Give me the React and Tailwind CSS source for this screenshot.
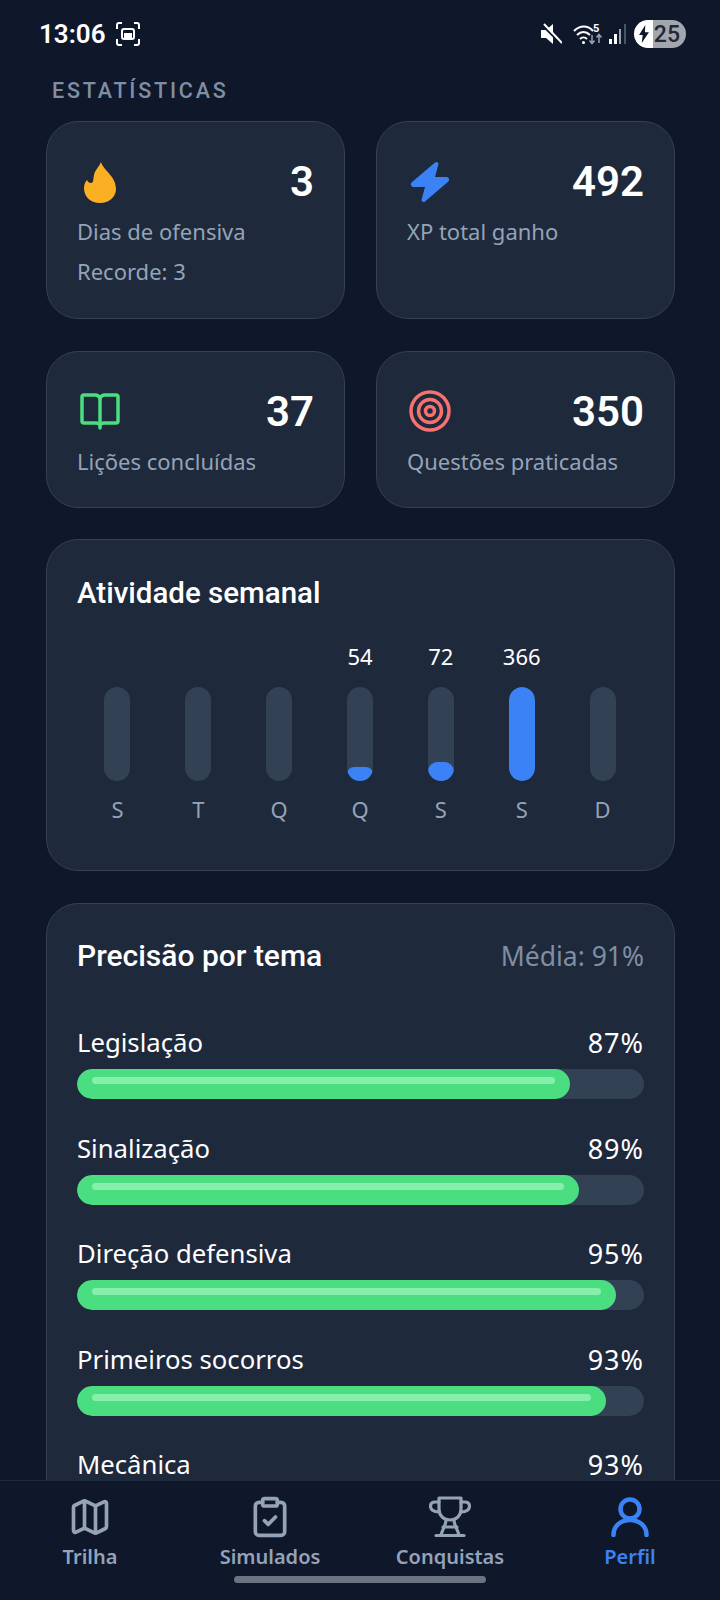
import { Map, ClipboardCheck } from 'lucide-react';

const sans = 'font-["Noto_Sans",sans-serif]';
const roboto = "font-['Roboto',sans-serif]";

const week = [
  { day: 'S', value: null, fill: 0 },
  { day: 'T', value: null, fill: 0 },
  { day: 'Q', value: null, fill: 0 },
  { day: 'Q', value: 54, fill: 14 },
  { day: 'S', value: 72, fill: 19 },
  { day: 'S', value: 366, fill: 94 },
  { day: 'D', value: null, fill: 0 },
];

// bar is the drawn width, pct the rounded number shown next to it
const topics = [
  { name: 'Legislação', pct: 87, bar: 87 },
  { name: 'Sinalização', pct: 89, bar: 88.6 },
  { name: 'Direção defensiva', pct: 95, bar: 95 },
  { name: 'Primeiros socorros', pct: 93, bar: 93.3 },
  { name: 'Mecânica', pct: 93, bar: 93.3 },
];

function FlameIcon() {
  return (
    <svg className="ml-[7px]" width="32" height="41" viewBox="0 0 32 41" fill="#fbb024">
      <path d="M17 0c2 8 15 14 15 27 0 8-7 14-16 14S0 35 0 26c0-3 1-6 3-8 1 2 2 3 4 3 3 0 2-4 3-8 1-5 5-8 7-13z" />
    </svg>
  );
}

function BoltIcon() {
  return (
    <svg className="ml-[3px]" width="40" height="42" viewBox="0 0 40 42" fill="#3b82f6">
      <path d="M25 1.500c1.600-1.400 4 0 3.400 2L25 16h11.500c2.300 0 3.500 2.700 1.900 4.400L15 40.500c-1.600 1.400-4 0-3.400-2L15 26H3.500C1.200 26 0 23.300 1.600 21.600z" />
    </svg>
  );
}

function BookIcon() {
  return (
    <svg className="ml-[3px] -mt-[2px]" width="40" height="38" viewBox="0 0 40 38" fill="none" stroke="#4ade80" strokeWidth="3.500" strokeLinejoin="round" strokeLinecap="round">
      <path d="M20 6c-1-2-3-3-5-3H4a2 2 0 0 0-2 2v24a2 2 0 0 0 2 2h12c2 0 4 1 4 2 0-1 2-2 4-2h12a2 2 0 0 0 2-2V5a2 2 0 0 0-2-2H25c-2 0-4 1-5 3z" />
      <path d="M20 6v30" />
    </svg>
  );
}

function TargetIcon() {
  return (
    <svg className="ml-[2px] -mt-[2px]" width="42" height="42" viewBox="0 0 42 42" fill="none" stroke="#f87171" strokeWidth="3.500">
      <circle cx="21" cy="21" r="19" />
      <circle cx="21" cy="21" r="11.500" />
      <circle cx="21" cy="21" r="4.500" />
    </svg>
  );
}

function TrophyIcon() {
  return (
    <svg width="42" height="42" viewBox="0 0 42 42" fill="none" stroke="#94a3b8" strokeWidth="3.200" strokeLinecap="round" strokeLinejoin="round">
      <path d="M10 2h22v11c0 7-5 11-11 11S10 20 10 13z" />
      <path d="M10 6H6c-3 0-4.500 2-4.500 4.500S4 16 10 16" />
      <path d="M32 6h4c3 0 4.500 2 4.500 4.500S38 16 32 16" />
      <path d="M17 24c0 5-3 8-5 15M25 24c0 5 3 8 5 15" />
      <path d="M14 31h14" />
      <path d="M7 39.500h28" />
    </svg>
  );
}

function PersonIcon() {
  return (
    <svg width="38" height="40" viewBox="0 0 38 40" fill="none" stroke="#3b82f6" strokeWidth="4.500" strokeLinecap="round">
      <circle cx="19" cy="12" r="9.500" />
      <path d="M2.500 38c0-9 7-15 16.500-15s16.500 6 16.500 15" />
    </svg>
  );
}

function StatCard({ icon, value, label, extra, className }) {
  return (
    <div className={`rounded-[32px] border border-[#334155] bg-[#1e293b] px-[30px] pt-[37px] ${className}`}>
      <div className="flex h-[46px] items-center justify-between">
        {icon}
        <span className={`${roboto} text-[42px] font-semibold leading-none text-white`}>{value}</span>
      </div>
      <p className={`${sans} mt-[11px] text-[22px] leading-[30px] text-[#94a3b8]`}>{label}</p>
      {extra && <p className={`${sans} mt-[10px] text-[22px] leading-[30px] text-[#94a3b8]`}>{extra}</p>}
    </div>
  );
}

function StatusBar() {
  return (
    <div className="flex h-[68px] items-center justify-between pl-[39px] pr-[34px]">
      <div className="flex items-center gap-[10px]">
        <span className={`${roboto} text-[26px] font-semibold text-white`}>13:06</span>
        <svg width="24" height="24" viewBox="0 0 24 24" fill="none" stroke="#fff" strokeWidth="2">
          <path d="M1 7V3c0-1 1-2 2-2h3M18 1h3c1 0 2 1 2 2v4M23 17v4c0 1-1 2-2 2h-3M6 23H3c-1 0-2-1-2-2v-4" />
          <rect x="6" y="7" width="12" height="10" rx="2" />
          <rect x="8" y="11" width="8" height="5" fill="#fff" stroke="none" />
        </svg>
      </div>
      <div className="flex items-center">
        <svg width="22" height="22" viewBox="0 0 22 22" fill="#fff">
          <path d="M1 7h5l7-6v15L1 7zM1 7v8h5l7 6v-5z" />
          <path d="M2 2l18 18" stroke="#0f172a" strokeWidth="2" />
          <path d="M4 1l18 19" stroke="#fff" strokeWidth="2" />
        </svg>
        <svg className="ml-[11px]" width="30" height="26" viewBox="0 0 30 26" fill="none" stroke="#fff" strokeWidth="2">
          <path d="M1 10c6-6 14-6 19 0M4 14c4-4 9-4 13 0M7 18c2-2 5-2 7 0" />
          <circle cx="10.500" cy="21.500" r="1.500" fill="#fff" stroke="none" />
          <text x="20" y="11" fill="#fff" stroke="none" fontSize="11" fontWeight="700" fontFamily="Roboto, sans-serif">5</text>
          <path d="M19 14v8M16.500 19.500l2.500 3 2.500-3" stroke="#94a3b8" strokeWidth="1.500" />
          <path d="M26 22v-8M23.500 16.500l2.500-3 2.500 3" stroke="#94a3b8" strokeWidth="1.500" />
        </svg>
        <svg className="ml-[6px]" width="19" height="22" viewBox="0 0 19 22" fill="#fff">
          <rect x="0" y="16" width="3" height="5" />
          <rect x="5" y="11" width="3" height="10" />
          <rect x="10" y="6" width="2" height="15" fill="#94a3b8" />
          <rect x="15" y="1" width="2" height="20" fill="#475569" />
        </svg>
        <div className="relative ml-[6px] flex h-[28px] w-[52px] items-center justify-end overflow-hidden rounded-full bg-[#a3a6ad]">
          <div className="absolute inset-y-0 left-0 flex w-[19px] items-center justify-center rounded-l-full bg-white">
            <svg width="12" height="18" viewBox="0 0 13 20" fill="#0f172a">
              <path d="M8 0L1 11h4l-1 9 8-12H7.500z" />
            </svg>
          </div>
          <span className={`${roboto} relative pr-[6px] text-[23px] font-medium leading-none text-[#1e293b]`}>25</span>
        </div>
      </div>
    </div>
  );
}

function NavItem({ icon, label, active }) {
  return (
    <div className="flex flex-col items-center">
      <div className="flex h-[42px] items-center justify-center">{icon}</div>
      <span className={`${sans} mt-[6px] text-[20px] font-semibold leading-[26px] ${active ? 'text-[#3b82f6]' : 'text-[#94a3b8]'}`}>
        {label}
      </span>
    </div>
  );
}

export default function App() {
  return (
    <div className="relative flex h-[1600px] w-[720px] flex-col overflow-hidden bg-[#0f172a]">
      <StatusBar />

      <main className="min-h-0 flex-1 overflow-hidden pl-[46px] pr-[45px]">
        <h2 className={`${roboto} ml-[6px] mt-[9px] text-[21.500px] font-medium leading-[28px] tracking-[2.800px] text-[#7f8ea3]`}>
          ESTATÍSTICAS
        </h2>

        <div className="mt-[16px] grid grid-cols-2 gap-x-[31px] gap-y-[32px]">
          <StatCard className="h-[198px]" icon={<FlameIcon />} value="3" label="Dias de ofensiva" extra="Recorde: 3" />
          <StatCard className="h-[198px]" icon={<BoltIcon />} value="492" label="XP total ganho" />
          <StatCard className="h-[157px]" icon={<BookIcon />} value="37" label="Lições concluídas" />
          <StatCard className="h-[157px]" icon={<TargetIcon />} value="350" label="Questões praticadas" />
        </div>

        <section className="mt-[31px] h-[332px] rounded-[32px] border border-[#334155] bg-[#1e293b] px-[30px] pt-[37px]">
          <h3 className={`${roboto} text-[29.500px] font-medium leading-[32px] text-white`}>Atividade semanal</h3>
          <div className="mt-[33px] grid grid-cols-7 pr-[1px]">
            {week.map((d, i) => (
              <div key={i} className="flex flex-col items-center">
                <span className={`${sans} h-[28px] text-[22px] leading-[28px] text-white`}>{d.value}</span>
                <div className="mt-[17px] flex h-[94px] w-[26px] items-end overflow-hidden rounded-full bg-[#334155]">
                  <div className="w-full rounded-full bg-[#3b82f6]" style={{ height: d.fill }} />
                </div>
                <span className={`${sans} mt-[13px] text-[22px] leading-[30px] text-[#94a3b8]`}>{d.day}</span>
              </div>
            ))}
          </div>
        </section>

        <section className="mt-[32px] rounded-[32px] border border-[#334155] bg-[#1e293b] px-[30px] pt-[35px]">
          <div className="flex items-center justify-between">
            <h3 className={`${roboto} text-[30px] font-medium leading-[34px] text-white`}>Precisão por tema</h3>
            <span className={`${sans} text-[26.500px] leading-[34px] text-[#7f8ea3]`}>Média: 91%</span>
          </div>
          <div className="mt-[55px] flex flex-col gap-[34.500px]">
            {topics.map(t => (
              <div key={t.name}>
                <div className={`${sans} flex items-center justify-between text-[25.700px] leading-[30px] text-white`}>
                  <span>{t.name}</span>
                  <span className="text-[27px] tracking-[1px]">{t.pct}%</span>
                </div>
                <div className="mt-[11px] h-[30px] overflow-hidden rounded-full bg-[#334155]">
                  <div className="h-full rounded-full bg-[#4ade80] px-[15px] pt-[8px]" style={{ width: `${t.bar}%` }}>
                    <div className="h-[7px] rounded-full bg-[#86efac]" />
                  </div>
                </div>
              </div>
            ))}
          </div>
        </section>
      </main>

      <nav className="z-10 h-[120px] shrink-0 border-t border-[#1e293b] bg-[#0f172a]">
        <div className="grid grid-cols-4 pt-[15px]">
          <NavItem label="Trilha" icon={<Map size={44} strokeWidth={2} color="#94a3b8" />} />
          <NavItem label="Simulados" icon={<ClipboardCheck size={44} strokeWidth={2} color="#94a3b8" />} />
          <NavItem label="Conquistas" icon={<TrophyIcon />} />
          <NavItem label="Perfil" active icon={<PersonIcon />} />
        </div>
        <div className="mx-auto mt-[6px] h-[7px] w-[252px] rounded-full bg-[#6b7280]" />
      </nav>
    </div>
  );
}
